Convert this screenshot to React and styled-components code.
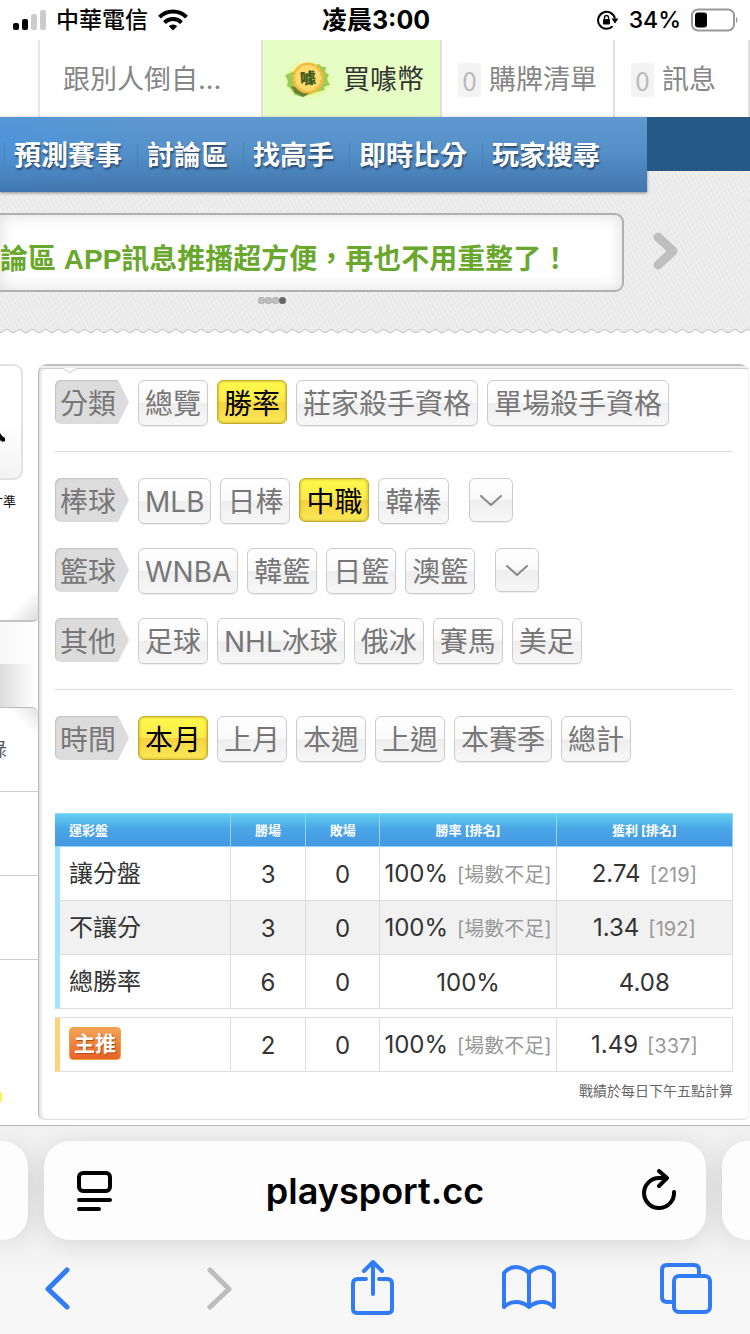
import React, { useState } from "react";
import styled, { createGlobalStyle, css } from "styled-components";

const GlobalStyle = createGlobalStyle`
  *, *::before, *::after { box-sizing: border-box; }
  html, body { margin: 0; padding: 0; background: #fff; }
  body {
    font-family: Inter, "Noto Sans CJK TC", sans-serif;
    color: #333;
    overflow-x: hidden;
  }
  button { font: inherit; color: inherit; background: none; border: 0; padding: 0; cursor: pointer; }
  a { color: inherit; text-decoration: none; }
  svg { display: block; }
`;

const Screen = styled.div`
  min-height: 100vh;
  display: flex;
  flex-direction: column;
  overflow: hidden;
`;

/* ---------- status bar ---------- */

const StatusBar = styled.header`
  display: grid;
  grid-template-columns: 1fr auto 1fr;
  align-items: center;
  height: 40px;
  padding: 0 11px 0 13px;
  color: #000;
  font-size: 23px;
  line-height: 40px;
  font-weight: 500;
  white-space: nowrap;
`;

const StatusGroup = styled.div`
  display: flex;
  align-items: center;
  gap: 10px;
  justify-content: ${(p) => (p.$end ? "flex-end" : "flex-start")};
`;

const Clock = styled.time`
  font-size: 25px;
  font-weight: 700;
`;

/* ---------- member bar ---------- */

const MemberBar = styled.nav`
  display: flex;
  height: 77px;
  font-size: 27px;
  font-weight: 400;
  white-space: nowrap;
  color: #868686;
`;

const MemberSpacer = styled.div`
  width: 40px;
  flex: none;
  border-right: 2px solid #e6e6e6;
`;

const MemberLink = styled.a`
  display: flex;
  align-items: center;
  gap: ${(p) => p.$gap || 8}px;
  flex: ${(p) => p.$grow || "0 0 auto"};
  padding: 2px ${(p) => p.$end || 16}px 0 ${(p) => p.$start || 16}px;
  border-right: 2px solid #e0e0e0;
  line-height: 36px;
  ${(p) => p.$highlight && css`
    background: #e6fdc3;
    color: #333;
  `}
`;

const Count = styled.span`
  display: grid;
  place-items: center;
  width: 23px;
  height: 34px;
  border-radius: 4px;
  background: #f3f3f3;
  color: #bbb;
  font-family: "Noto Sans CJK TC", sans-serif;
  font-size: 26px;
  line-height: 30px;
`;

/* ---------- site header ---------- */

const SiteHeader = styled.section`
  background:
    repeating-linear-gradient(63deg, rgba(255,255,255,.3) 0 1px, transparent 1px 4px),
    repeating-linear-gradient(-38deg, rgba(0,0,0,.01) 0 2px, transparent 2px 5px),
    #ebebeb;
`;

const NavStrip = styled.div`
  display: flex;
  align-items: flex-start;
`;

const NavBar = styled.nav`
  display: flex;
  align-items: center;
  flex: 1;
  height: 75px;
  padding: 3px 0 0 4px;
  background:
    radial-gradient(ellipse at 0 30%, rgba(70,150,230,.5), transparent 70%) left / 160px 100% no-repeat,
    linear-gradient(#5e98cf, #5590c9 45%, #4076ad);
  box-shadow: 0 1px 3px #888;
`;

const NavTail = styled.div`
  width: 103px;
  height: 54px;
  background: #275987;
`;

const NavLink = styled.a`
  padding: 0 15px 0 9px;
  border-left: 1px solid #3f86b5;
  color: #fff;
  font-size: 27px;
  line-height: 26px;
  font-weight: 700;
  text-shadow: 1px 2px 2px #2a4a6a;
  white-space: nowrap;
`;

const Carousel = styled.div`
  display: grid;
  grid-template-columns: 1fr 126px;
  padding-top: 21px;
`;

const Announcement = styled.a`
  display: flex;
  align-items: center;
  height: 79px;
  padding-top: 14px;
  border: 2px solid #b0b0b0;
  border-left: 0;
  border-radius: 0 9px 9px 0;
  background: #fff;
  box-shadow: inset 0 0 16px #ddd;
  color: #69a82d;
  font-family: "Liberation Sans", "Noto Sans CJK TC", sans-serif;
  font-size: 28px;
  font-weight: 700;
  line-height: 40px;
  white-space: nowrap;
  overflow: hidden;
`;

const NextButton = styled.button`
  display: grid;
  place-items: center;
  width: 84px;
  height: 75px;
`;

const Dots = styled.div`
  display: flex;
  justify-content: center;
  padding: 5px 206px 0 0;
  height: 37px;
`;

const Dot = styled.span`
  width: 7px;
  height: 7px;
  border-radius: 50%;
  background: ${(p) => (p.$on ? "#666" : "#bdbdbd")};
  box-shadow: inset 0 0 1px #888;
`;

/* ---------- page body ---------- */

const Body = styled.main`
  flex: 1;
  display: grid;
  grid-template-columns: 38px 1fr;
  padding: 31px 1px 5px 0;
`;

const Side = styled.aside`
  display: flex;
  flex-direction: column;
  margin-bottom: -5px;
  overflow: hidden;
`;

const SideProfile = styled.section`
  height: 258px;
  border-bottom: 2px solid #c4c4c4;
  border-radius: 0 0 5px 0;
  background: linear-gradient(315deg, #ddd, #fff 24px);
`;

const Avatar = styled.div`
  width: 23px;
  height: 116px;
  padding-top: 67px;
  border: solid #e2e2e2;
  border-width: 2px 2px 2px 0;
  border-radius: 0 9px 9px 0;
  background: linear-gradient(#fff 50%, #f3f3f3);
`;

const SideText = styled.div`
  display: flex;
  justify-content: flex-end;
  overflow: hidden;
  white-space: nowrap;
  width: ${(p) => p.$width}px;
  font-size: ${(p) => p.$size}px;
  line-height: ${(p) => p.$line}px;
  color: ${(p) => p.$color};
`;

const SideGap = styled.div`
  height: 85px;
  background:
    linear-gradient(90deg, #dcdcdc, #fff 36px) 0 42px / 100% 43px no-repeat,
    linear-gradient(90deg, #f8f8f8, #fff);
`;

const SideList = styled.section`
  flex: 1;
  border-top: 1px solid #bbb;
  border-radius: 0 6px 0 0;
  background: linear-gradient(225deg, #e2e2e2, #fff 22px);
`;

const SideRow = styled.div`
  height: 84px;
  padding-top: 22px;
  border-bottom: 1px solid #ccc;
`;

const SideMark = styled.div`
  width: 2px;
  height: 10px;
  margin-top: 132px;
  border-radius: 0 5px 5px 0;
  background: #fff04a;
`;

const Panel = styled.section`
  border: 1px solid #bbb;
  border-top: 2px solid #c0c0c0;
  border-right-color: #f0f0f0;
  border-bottom-color: #e2e2e2;
  border-radius: 9px 9px 6px 6px;
  box-shadow: inset 3px 0 4px -2px #ccc;
`;

const PanelLip = styled.div`
  height: 14px;
`;

const PanelBody = styled.div`
  padding: 0 15px 18px 16px;
`;

const FilterGroup = styled.div`
  display: flex;
  flex-direction: column;
  gap: 24px;
  padding-bottom: 25px;
  & + & {
    border-top: 1px solid #ddd;
    padding-top: 26px;
  }
  &:last-of-type { padding-bottom: 51px; }
`;

const FilterRow = styled.div`
  display: flex;
  align-items: flex-start;
  gap: 9px;
  height: 46px;
  font-size: 28px;
  font-weight: 400;
  color: #777;
`;

const Tag = styled.span`
  display: grid;
  place-items: center start;
  width: 74px;
  height: 44px;
  padding: 3px 0 0 5px;
  border-radius: 6px 0 0 6px;
  background: #dcdcdc;
  box-shadow: inset 1px 1px 1px #c4c4c4;
  clip-path: polygon(0 0, 63px 0, 100% 50%, 63px 100%, 0 100%);
  line-height: 40px;
`;

const Chip = styled.button`
  height: 46px;
  padding: 2px 6px 0;
  border: 1px solid #ccc;
  border-radius: 6px;
  background: linear-gradient(#fff, #f9f9f9 49%, #eee 51%, #f7f7f7);
  box-shadow: 0 1px 1px #eee;
  line-height: 40px;
  white-space: nowrap;
  ${(p) => p.$active && css`
    height: 44px;
    padding-top: 3px;
    border: 1px solid #c2ac30;
    background: linear-gradient(#fff94a, #fbea4c 49%, #f6d23e 51%, #fbe957);
    box-shadow: inset 0 0 3px #b89f20;
    color: #000;
  `}
`;

const MoreButton = styled(Chip)`
  display: grid;
  place-items: center;
  width: 44px;
  height: 44px;
  margin-left: 11px;
`;

const Results = styled.table`
  width: 100%;
  table-layout: fixed;
  border-collapse: separate;
  border-spacing: 0;
  font-size: 24px;
  color: #333;
  & + & {
    margin-top: 8px;
    border-top: 1px solid #ddd;
  }
`;

const WideCol = styled.col`
  width: 26%;
`;

const NarrowCol = styled.col`
  width: 11%;
`;

const HeadCell = styled.th`
  height: 34px;
  padding: 0 0 0 ${(p) => (p.$first ? 14 : 0)}px;
  border: solid #8cd8f6;
  border-width: 1px 1px 1px 0;
  background: linear-gradient(#63d0f0, #4aa6e6 45%, #4597e3);
  color: #fff;
  font-size: 13px;
  line-height: 18px;
  font-weight: 700;
  text-align: ${(p) => (p.$first ? "left" : "center")};
`;

const RowHead = styled.th`
  height: 54px;
  padding: 1px 0 0 9px;
  border: solid #ddd;
  border-width: 0 1px 1px 5px;
  border-left-color: ${(p) => (p.$featured ? "#fdd27a" : "#a2e4ff")};
  font-weight: 400;
  line-height: 34px;
  text-align: left;
`;

const Cell = styled.td`
  padding: 2px 0 0;
  border: solid #ddd;
  border-width: 0 1px 1px 0;
  text-align: center;
  white-space: nowrap;
  line-height: 34px;
`;

const Row = styled.tr`
  background: ${(p) => (p.$shaded ? "#f1f1f1" : "#fff")};
`;

const Rank = styled.small`
  margin-left: 9px;
  color: #999;
  font-size: 20px;
`;

const Badge = styled.span`
  display: block;
  width: max-content;
  margin-bottom: 4px;
  padding: 0 4px;
  border: 1px solid #f0a040;
  border-radius: 4px;
  background: linear-gradient(#f3a556, #ea6228);
  color: #fff;
  font-size: 21px;
  line-height: 31px;
  font-weight: 700;
  text-shadow: 1px 1px 1px #a94a10;
`;

const Note = styled.p`
  margin: 9px 0 0;
  color: #666;
  font-size: 14px;
  line-height: 20px;
  text-align: right;
`;

/* ---------- browser chrome ---------- */

const Browser = styled.footer`
  border-top: 1px solid #b8b8b8;
  background: linear-gradient(#f2f2f2, #ebebeb 60px, #f7f7f7 160px);
  color: #000;
`;

const AddressRow = styled.div`
  display: flex;
  gap: 16px;
  padding-top: 15px;
`;

const Pill = styled.div`
  display: flex;
  align-items: center;
  justify-content: space-between;
  flex: 1;
  height: 99px;
  padding: 0 30px;
  border-radius: 26px;
  background: #fdfdfd;
  box-shadow: 0 4px 24px rgba(0,0,0,.1);
`;

const Peek = styled.div`
  width: 28px;
  background: #fdfdfd;
  border-radius: ${(p) => (p.$right ? "26px 0 0 26px" : "0 26px 26px 0")};
  box-shadow: 0 4px 24px rgba(0,0,0,.1);
`;

const Url = styled.span`
  font-size: 36px;
  line-height: 44px;
  font-weight: 600;
`;

const Toolbar = styled.div`
  display: flex;
  justify-content: space-between;
  padding: 19px 34px 15px 28px;
  color: #327bf6;
`;

const ToolButton = styled.button`
  width: 60px;
  height: 60px;
  &:disabled { color: #bdbdbd; }
`;

const Stroke = ({ w, h, sw = 2, color = "currentColor", children }) => (
  <svg width={w} height={h} viewBox={`0 0 ${w} ${h}`} fill="none" stroke={color}
    strokeWidth={sw} strokeLinecap="round" strokeLinejoin="round" aria-hidden="true">
    {children}
  </svg>
);

const Signal = () => (
  <svg width="33" height="22" aria-hidden="true">
    <rect x="0" y="14" width="6" height="7" rx="2" />
    <rect x="9" y="10" width="6" height="11" rx="2" />
    <rect x="18" y="5" width="6" height="16" rx="2" fill="#ccc" />
    <rect x="27" y="1" width="6" height="20" rx="2" fill="#ccc" />
  </svg>
);

const Wifi = () => (
  <svg width="30" height="22" viewBox="0 0 30 22" fill="none" stroke="#000" strokeWidth="4" aria-hidden="true">
    <path d="M1.5 8.2a19 19 0 0 1 27 0" />
    <path d="M6.5 13.6a12 12 0 0 1 17 0" />
    <path d="M15 21.500l-4.200-4.300a6 6 0 0 1 8.400 0z" fill="#000" stroke="none" />
  </svg>
);

const RotationLock = () => (
  <svg width="22" height="20" viewBox="0 0 22 20" fill="none" stroke="#000" aria-hidden="true">
    <path d="M15.600 16.300A8.500 8.500 0 1 1 17.900 8.500" strokeWidth="2" />
    <path d="M14.500 8.500h7l-3.500 5z" fill="#000" stroke="none" />
    <rect x="6" y="9" width="7" height="5.500" rx="1" fill="#000" stroke="none" />
    <path d="M7.500 9V7.500a2 2 0 0 1 4 0V9" strokeWidth="1.400" />
  </svg>
);

const Battery = () => (
  <svg width="48" height="24" viewBox="0 0 48 24" aria-hidden="true">
    <rect x="1" y="1.500" width="42" height="21" rx="6" fill="none" stroke="#999" strokeWidth="2" />
    <rect x="4" y="4.500" width="12" height="15" rx="3" />
    <path d="M45 8.500q3 3.500 0 7z" fill="#999" />
  </svg>
);

const Coin = () => (
  <svg width="50" height="40" viewBox="0 0 50 40" aria-hidden="true">
    <defs>
      <radialGradient id="glow">
        <stop offset="0.500" stopColor="#f4f26a" />
        <stop offset="1" stopColor="#f4f26a" stopOpacity="0" />
      </radialGradient>
    </defs>
    <ellipse cx="25" cy="20" rx="25" ry="19" fill="url(#glow)" />
    <path d="M2 15l12-5 22-6 3 3 4 0-1 5 4 3-2 4 3 6-6 2 1 3-9 2-13 5-8-2-5-7-3-2 1-5z" fill="#9ccc58" />
    <path d="M8 26l22 5-10 6-8-4z" fill="#64803a" />
    <circle cx="25" cy="18" r="15.500" fill="#f8b93c" />
    <circle cx="25" cy="18" r="12.500" fill="#ffdc6a" stroke="#fff0a0" strokeWidth="1" strokeDasharray="2 2" />
    <text x="25" y="24" textAnchor="middle" fontSize="16" fontWeight="900" fill="#3f5a20"
      fontFamily="Noto Sans CJK TC, sans-serif" transform="rotate(-5 25 18)">噱</text>
  </svg>
);

const Scallop = () => (
  <svg width="100%" height="4" aria-hidden="true">
    <defs>
      <pattern id="scallop" width="13" height="4" patternUnits="userSpaceOnUse">
        <path d="M0 3.500C3 3.500 4 .5 6.500 .5S10 3.500 13 3.500V4H0z" fill="#fff" />
        <path d="M0 3.500C3 3.500 4 .5 6.500 .5S10 3.500 13 3.500" fill="none" stroke="#bbb" />
      </pattern>
    </defs>
    <rect width="100%" height="4" fill="url(#scallop)" />
  </svg>
);

const Lip = () => (
  <svg width="100%" height="12" aria-hidden="true">
    <rect width="100%" height="2" fill="#eee" />
    <path d="M0 2.500H24l7 4 7-4H4000" fill="none" stroke="#ccc" />
  </svg>
);

const filterGroups = [
  [{ label: "分類", options: ["總覽", "勝率", "莊家殺手資格", "單場殺手資格"], initial: "勝率" }],
  [
    { label: "棒球", options: ["MLB", "日棒", "中職", "韓棒"], initial: "中職", more: true },
    { label: "籃球", options: ["WNBA", "韓籃", "日籃", "澳籃"], more: true },
    { label: "其他", options: ["足球", "NHL冰球", "俄冰", "賽馬", "美足"] },
  ],
  [{ label: "時間", options: ["本月", "上月", "本週", "上週", "本賽季", "總計"], initial: "本月" }],
];

const records = [
  { name: "讓分盤", win: 3, lose: 0, rate: "100%", rateRank: "場數不足", profit: "2.74", profitRank: "219" },
  { name: "不讓分", win: 3, lose: 0, rate: "100%", rateRank: "場數不足", profit: "1.34", profitRank: "192" },
  { name: "總勝率", win: 6, lose: 0, rate: "100%", profit: "4.08" },
];

const featured = { name: "主推", win: 2, lose: 0, rate: "100%", rateRank: "場數不足", profit: "1.49", profitRank: "337" };

function Filter({ label, options, initial, more }) {
  const [selected, setSelected] = useState(initial);
  return (
    <FilterRow>
      <Tag>{label}</Tag>
      {options.map((o) => (
        <Chip key={o} type="button" $active={o === selected} aria-pressed={o === selected} onClick={() => setSelected(o)}>
          {o}
        </Chip>
      ))}
      {more && (
        <MoreButton type="button" aria-label={`更多${label}`}>
          <Stroke w={22} h={12} sw={2} color="#888"><path d="M1 1l10 9L21 1" /></Stroke>
        </MoreButton>
      )}
    </FilterRow>
  );
}

function Columns() {
  return (
    <colgroup>
      <WideCol /><NarrowCol /><NarrowCol /><WideCol /><WideCol />
    </colgroup>
  );
}

function Record({ data, shaded, isFeatured }) {
  return (
    <Row $shaded={shaded}>
      <RowHead scope="row" $featured={isFeatured}>{isFeatured ? <Badge>{data.name}</Badge> : data.name}</RowHead>
      <Cell>{data.win}</Cell>
      <Cell>{data.lose}</Cell>
      <Cell>{data.rate}{data.rateRank && <Rank>[{data.rateRank}]</Rank>}</Cell>
      <Cell>{data.profit}{data.profitRank && <Rank>[{data.profitRank}]</Rank>}</Cell>
    </Row>
  );
}

export default function App() {
  return (
    <Screen>
      <GlobalStyle />
      <StatusBar>
        <StatusGroup><Signal /><span>中華電信</span><Wifi /></StatusGroup>
        <Clock>凌晨3:00</Clock>
        <StatusGroup $end><RotationLock /><span>34%</span><Battery /></StatusGroup>
      </StatusBar>

      <MemberBar>
        <MemberSpacer />
        <MemberLink href="#follow" $grow="1 1 0" $start={23}>跟別人倒自…</MemberLink>
        <MemberLink href="#coins" $highlight $start={20} $gap={10}><Coin />買噱幣</MemberLink>
        <MemberLink href="#cart"><Count>0</Count>購牌清單</MemberLink>
        <MemberLink href="#messages" $end={32}><Count>0</Count>訊息</MemberLink>
      </MemberBar>

      <SiteHeader>
        <NavStrip>
          <NavBar>
            {["預測賽事", "討論區", "找高手", "即時比分", "玩家搜尋"].map((t) => (
              <NavLink key={t} href={`#${t}`}>{t}</NavLink>
            ))}
          </NavBar>
          <NavTail />
        </NavStrip>
        <Carousel>
          <Announcement href="#news">論區 APP訊息推播超方便，再也不用重整了！</Announcement>
          <NextButton type="button" aria-label="下一則">
            <Stroke w={26} h={40} sw={9} color="#bfbfbf"><path d="M5 6l15 14L5 34" /></Stroke>
          </NextButton>
        </Carousel>
        <Dots><Dot /><Dot /><Dot /><Dot $on /></Dots>
        <Scallop />
      </SiteHeader>

      <Body>
        <Side>
          <SideProfile>
            <Avatar>
              <svg width="5" height="10" aria-hidden="true"><path d="M0 0q2 4 5 5v3q-3 2-5-1z" /></svg>
            </Avatar>
            <SideText $width={16} $size={13} $line={42} $color="#111">才準</SideText>
          </SideProfile>
          <SideGap />
          <SideList>
            <SideRow><SideText $width={7} $size={20} $line={40} $color="#555">紀錄</SideText></SideRow>
            <SideRow />
            <SideRow />
            <SideMark />
          </SideList>
        </Side>

        <Panel>
          <PanelLip><Lip /></PanelLip>
          <PanelBody>
            {filterGroups.map((group) => (
              <FilterGroup key={group[0].label}>
                {group.map((f) => <Filter key={f.label} {...f} />)}
              </FilterGroup>
            ))}
            <Results>
              <Columns />
              <thead>
                <tr>
                  <HeadCell scope="col" $first>運彩盤</HeadCell>
                  {["勝場", "敗場", "勝率 [排名]", "獲利 [排名]"].map((h) => (
                    <HeadCell key={h} scope="col">{h}</HeadCell>
                  ))}
                </tr>
              </thead>
              <tbody>
                {records.map((r, i) => <Record key={r.name} data={r} shaded={i === 1} />)}
              </tbody>
            </Results>
            <Results>
              <Columns />
              <tbody><Record data={featured} isFeatured /></tbody>
            </Results>
            <Note>戰績於每日下午五點計算</Note>
          </PanelBody>
        </Panel>
      </Body>

      <Browser>
        <AddressRow>
          <Peek />
          <Pill>
            <button type="button" aria-label="網頁選單">
              <Stroke w={38} h={44} sw={4}>
                <rect x="5" y="4" width="31" height="18" rx="4" />
                <path d="M5 31h31M5 40h20" />
              </Stroke>
            </button>
            <Url>playsport.cc</Url>
            <button type="button" aria-label="重新載入">
              <Stroke w={38} h={44} sw={4}>
                <path d="M36 23a15 15 0 1 1-15-14h8M21 2l8 7-8 8" />
              </Stroke>
            </button>
          </Pill>
          <Peek $right />
        </AddressRow>
        <Toolbar>
          <ToolButton type="button" aria-label="返回">
            <Stroke w={60} h={60} sw={5}><path d="M39 11L20 30l19 18" /></Stroke>
          </ToolButton>
          <ToolButton type="button" aria-label="前進" disabled>
            <Stroke w={60} h={60} sw={5}><path d="M25 11l19 19-19 18" /></Stroke>
          </ToolButton>
          <ToolButton type="button" aria-label="分享">
            <Stroke w={60} h={60} sw={4}>
              <path d="M24 20h-8q-5 0-5 5v25q0 4 5 4h29q5 0 5-4V25q0-5-5-5h-8M31 35V4M22 12l9-9 9 9" />
            </Stroke>
          </ToolButton>
          <ToolButton type="button" aria-label="書籤">
            <Stroke w={60} h={60} sw={4}>
              <path d="M5 14q5-6 12-6t13 6q6-6 13-6t12 6v34q-5-5-12-5t-13 5q-6-5-13-5t-12 5zM30 15v33" />
            </Stroke>
          </ToolButton>
          <ToolButton type="button" aria-label="分頁">
            <Stroke w={60} h={60} sw={4}>
              <path d="M16 43H11q-5 0-5-5V11q0-5 5-5h27q5 0 5 5v6" />
              <rect x="18" y="17" width="36" height="36" rx="5" />
            </Stroke>
          </ToolButton>
        </Toolbar>
      </Browser>
    </Screen>
  );
}
